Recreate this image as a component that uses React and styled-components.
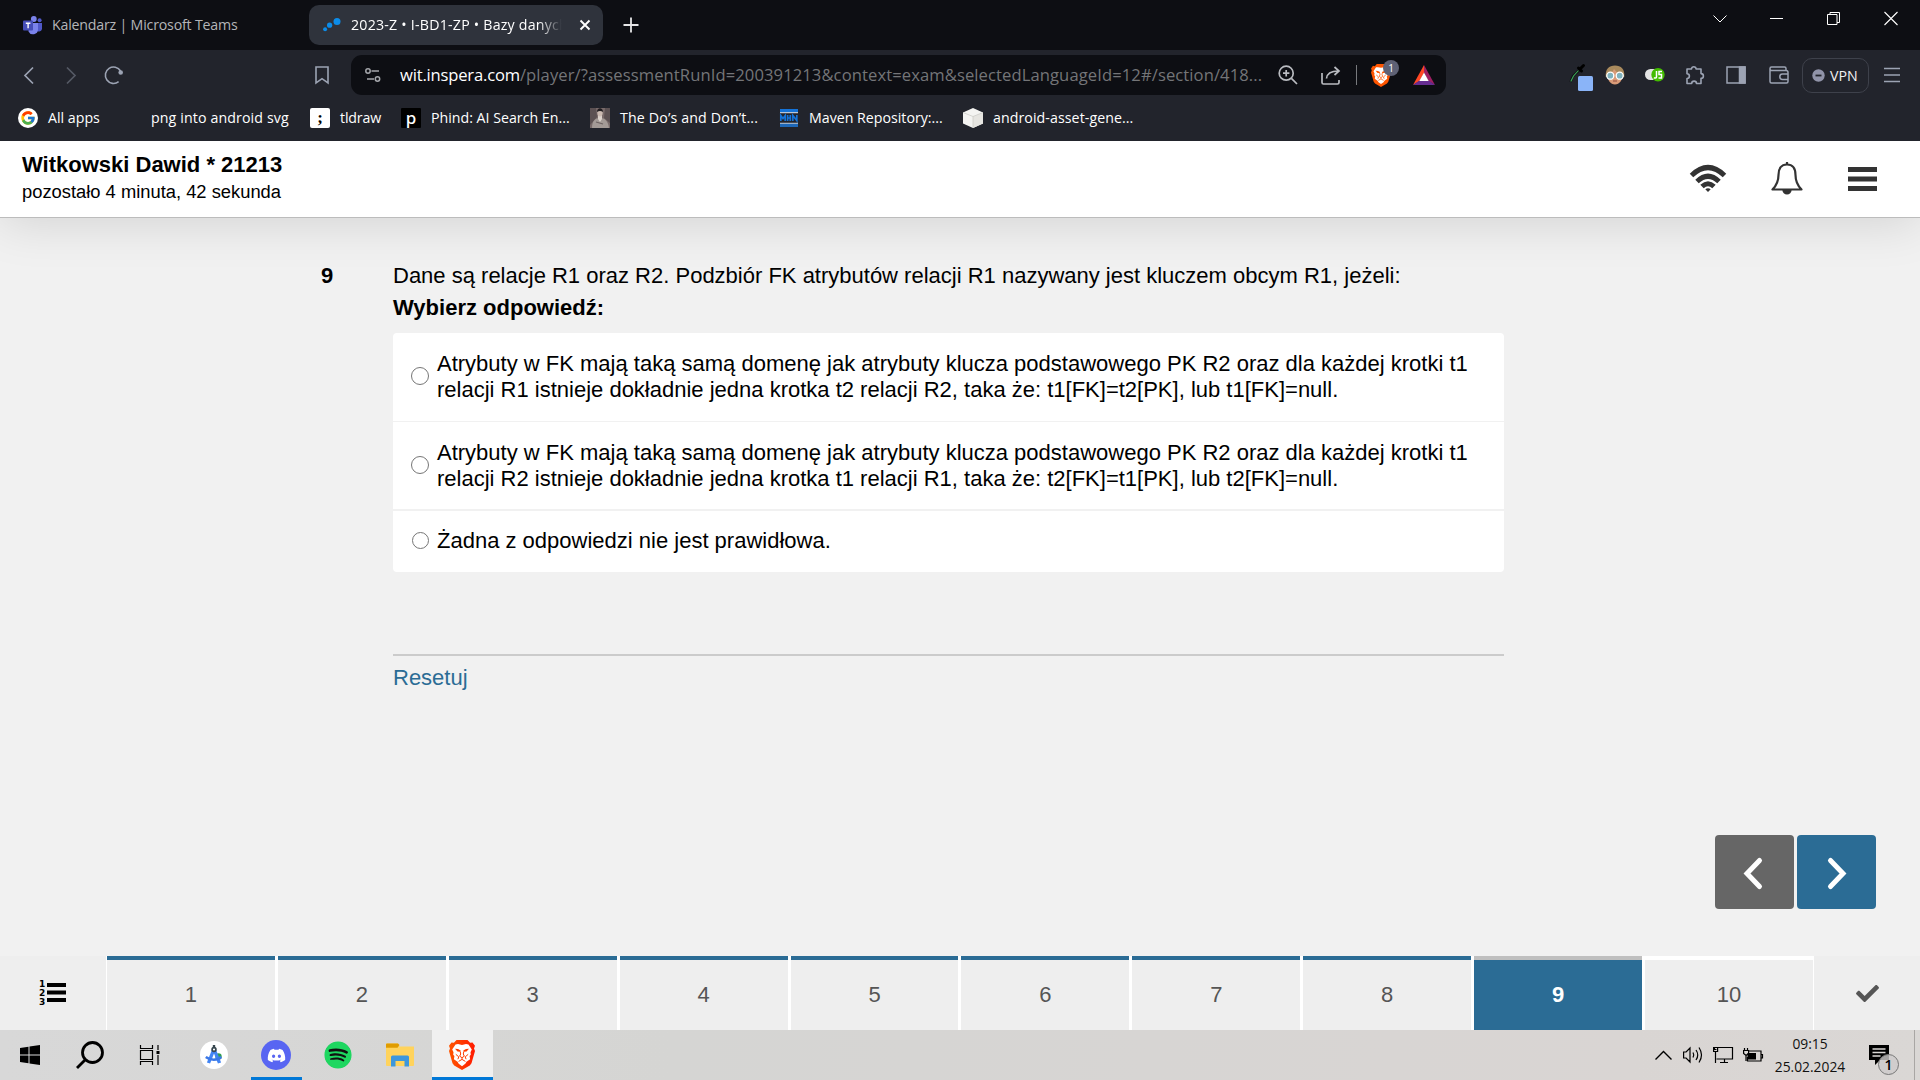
import React from 'react';
import styled, { createGlobalStyle, css } from 'styled-components';
import { FcGoogle } from 'react-icons/fc';
import { FaDiscord, FaSpotify, FaCheck } from 'react-icons/fa';

const GlobalStyle = createGlobalStyle`
  * { box-sizing: border-box; }
  body { margin: 0; overflow: hidden; background: #f1f1f1; }
  svg { display: block; flex: none; overflow: visible; }
`;

const UI_FONT = `'Open Sans', 'Noto Sans', sans-serif`;
const PAGE_FONT = `'Liberation Sans', Arial, sans-serif`;

const Screen = styled.div`
  width: 1920px;
  height: 1080px;
  display: grid;
  grid-template-rows: 50px 91px 77px 738px 74px 50px;
  font-family: ${PAGE_FONT};
`;

/* ---------- browser tab strip ---------- */
const TabStrip = styled.div`
  display: flex;
  align-items: center;
  background: #0d0e13;
  font-family: ${UI_FONT};
  font-size: 14.2px;
`;
const Tab = styled.div`
  display: flex;
  align-items: center;
  height: 40px;
  width: ${(p) => p.$width}px;
  padding-left: ${(p) => p.$pad}px;
  gap: ${(p) => p.$gap}px;
  border-radius: 10px;
  letter-spacing: ${(p) => (p.$active ? '0.22px' : '-0.2px')};
  color: ${(p) => (p.$active ? '#fff' : '#b4b5b8')};
  background: ${(p) => (p.$active ? '#2f333c' : 'transparent')};
  white-space: nowrap;
`;
const TabTitle = styled.span`
  width: ${(p) => p.$width}px;
  padding-bottom: 2px;
  overflow: hidden;
  ${(p) => p.$fade && css`mask-image: linear-gradient(90deg, #000 88%, transparent 99%);`}
`;
const NewTab = styled.div`margin-left: 20px;`;
const WindowControls = styled.div`
  margin-left: auto;
  align-self: flex-start;
  display: flex;
  align-items: center;
  gap: 43px;
  padding: 12px 22px 0 0;
`;

/* ---------- toolbar ---------- */
const Toolbar = styled.div`
  position: relative;
  z-index: 1;
  background: #22242c;
  font-family: ${UI_FONT};
`;
const ToolRow = styled.div`
  display: flex;
  align-items: center;
  height: 50px;
  padding-right: 18px;
`;
const Slot = styled.div`
  display: flex;
  align-items: center;
  justify-content: center;
  flex: none;
  position: relative;
  width: ${(p) => p.$w || 20}px;
  height: 24px;
  margin-left: ${(p) => p.$ml || 0}px;
`;
const AddressBar = styled.div`
  display: flex;
  align-items: center;
  width: 1095px;
  height: 40px;
  margin-left: 22px;
  border-radius: 11px;
  background: #0d0e13;
`;
const Url = styled.div`
  margin-left: 19px;
  width: 868px;
  font-size: 16.6px;
  line-height: 24px;
  white-space: nowrap;
  color: #747578;
`;
const Host = styled.span`
  color: #fff;
  letter-spacing: -0.19px;
`;
const Path = styled.span`letter-spacing: 0.09px;`;
const Divider = styled.div`
  width: 1px;
  height: 20px;
  margin-left: 15px;
  background: #77797d;
`;
const ShieldBadge = styled.span`
  position: absolute;
  left: 12px;
  top: -3px;
  width: 16px;
  height: 16px;
  border-radius: 8px;
  background: #5e6175;
  color: #fff;
  font-size: 10px;
  line-height: 16px;
  text-align: center;
`;
const VpnButton = styled.div`
  display: flex;
  align-items: center;
  gap: 5px;
  width: 67px;
  height: 35px;
  margin-left: 13px;
  padding-left: 9px;
  border: 1px solid #3e414b;
  border-radius: 10px;
  color: #f0f0f2;
  font-size: 14.2px;
`;
const Bookmarks = styled.div`
  display: flex;
  align-items: center;
  height: 36px;
  padding-left: 18px;
  font-size: 14.2px;
  color: #fff;
`;
const Bookmark = styled.div`
  display: flex;
  align-items: center;
  gap: ${(p) => p.$gap || 10}px;
  width: ${(p) => p.$w}px;
  letter-spacing: ${(p) => p.$ls || 0}px;
  white-space: nowrap;
`;
const BookmarkName = styled.span`padding-bottom: 2px;`;
const Favicon = styled.div`
  display: flex;
  align-items: center;
  justify-content: center;
  flex: none;
  width: 20px;
  height: 20px;
  border-radius: ${(p) => p.$radius || 0}px;
  background: ${(p) => p.$bg || 'transparent'};
  color: ${(p) => p.$color || '#fff'};
  font: ${(p) => p.$font || 'inherit'};
`;

/* ---------- exam header ---------- */
const ExamHeader = styled.header`
  display: flex;
  justify-content: space-between;
  padding: 10px 43px 0 22px;
  background: #fff;
  border-bottom: 1px solid #bcbcbc;
  box-shadow: 0 4px 50px rgba(0, 0, 0, 0.13);
  color: #000;
  line-height: 27px;
`;
const Candidate = styled.div`font-size: 22px; font-weight: 700;`;
const TimeLeft = styled.div`font-size: 18.35px;`;
const HeaderIcons = styled.div`
  display: flex;
  align-items: center;
  height: 55px;
`;
const HeaderIcon = styled.div`margin-left: ${(p) => p.$ml || 0}px;`;

/* ---------- question ---------- */
const Main = styled.main`
  display: flex;
  flex-direction: column;
  justify-content: space-between;
  padding: 42px 44px 47px 321px;
  font-size: 22px;
  color: #000;
`;
const Question = styled.section`
  display: grid;
  grid-template-columns: 72px 1111px;
  line-height: 32px;
`;
const Bold = styled.div`font-weight: 700;`;
const Answers = styled.div`
  margin-top: 9px;
  border-radius: 4px;
  overflow: hidden;
`;
const Answer = styled.label`
  display: flex;
  align-items: center;
  gap: 8px;
  height: ${(p) => p.$h}px;
  padding: 0 30px 0 18px;
  border-bottom: ${(p) => p.$line || 0}px solid #f1f1f1;
  background: #fff;
  line-height: ${(p) => p.$lead || 26}px;
`;
const Radio = styled.span`
  flex: none;
  width: ${(p) => (p.$small ? 17 : 18)}px;
  height: ${(p) => (p.$small ? 17 : 18)}px;
  margin: ${(p) => (p.$small ? '0 0.5px 2px 0.5px' : '0 0 2px')};
  border: 1.4px solid #767676;
  border-radius: 50%;
`;
const AnswerText = styled.span`padding: ${(p) => p.$down || 0}px 0 ${(p) => p.$up || 0}px;`;
const Footer = styled.div`
  margin-top: 82px;
  padding-top: 6px;
  border-top: 2px solid #cbcbcb;
  color: #2b6c95;
`;
const Pager = styled.div`
  display: flex;
  justify-content: flex-end;
  gap: 3px;
`;
const PagerButton = styled.div`
  display: flex;
  align-items: center;
  justify-content: center;
  width: 79px;
  height: 74px;
  padding: 2px ${(p) => (p.$primary ? 0 : 3)}px 0 0;
  border-radius: 4px;
  background: ${(p) => (p.$primary ? '#2b6c95' : '#666')};
`;

/* ---------- question navigation ---------- */
const QuestionNav = styled.nav`
  display: grid;
  grid-template-columns: 106px 1706px 106px;
  gap: 1px;
  background: #fff;
`;
const NavEnd = styled.div`
  display: flex;
  align-items: center;
  justify-content: center;
  background: #eee;
`;
const NavTabs = styled.div`
  display: grid;
  grid-template-columns: repeat(10, 1fr);
  gap: 3px;
`;
const NavTab = styled.div`
  display: flex;
  align-items: center;
  justify-content: center;
  border-top: 4px solid ${(p) => p.$edge};
  background: ${(p) => (p.$current ? '#2b6c95' : '#eee')};
  color: ${(p) => (p.$current ? '#fff' : '#555')};
  font-size: 22px;
  font-weight: ${(p) => (p.$current ? 700 : 400)};
  padding-bottom: 1px;
`;
const NumberedList = styled.div`
  display: flex;
  align-items: center;
  gap: 2px;
  padding-right: 1px;
`;
const Digits = styled.div`
  width: 6px;
  font: 700 9px/9px 'DejaVu Sans', sans-serif;
  color: #000;
`;

/* ---------- taskbar ---------- */
const Taskbar = styled.footer`
  display: flex;
  background: linear-gradient(90deg, #d8d8d8, #d5d5d3 35%, #d9d5d3 85%, #dad7d5);
  font-family: ${UI_FONT};
`;
const TaskItem = styled.div`
  display: flex;
  align-items: center;
  justify-content: center;
  width: ${(p) => p.$w}px;
  margin-left: ${(p) => p.$ml || 0}px;
  padding: 3px ${(p) => (p.$open ? 1 : 0)}px 0 0;
  border-bottom: 3px solid ${(p) => (p.$open ? '#0078d7' : 'transparent')};
  background: ${(p) => (p.$focus ? '#f0f0f0' : 'transparent')};
  background-clip: padding-box;
`;
const Disc = styled.div`
  display: flex;
  align-items: center;
  justify-content: center;
  flex: none;
  width: ${(p) => p.$size}px;
  height: ${(p) => p.$size}px;
  border-radius: 50%;
  background: ${(p) => p.$bg};
`;
const Tray = styled.div`
  display: flex;
  align-items: center;
  margin-left: auto;
`;
const Clock = styled.div`
  width: 84px;
  margin-left: 5px;
  font-size: 13.8px;
  line-height: 23px;
  text-align: center;
  color: #111;
`;
const Notice = styled.div`
  position: relative;
  width: 32px;
  height: 30px;
  margin-left: 17px;
  padding-top: 5px;
`;
const NoticeCount = styled.span`
  position: absolute;
  left: 9px;
  top: 14px;
  width: 21px;
  height: 21px;
  border: 1px solid #777;
  border-radius: 50%;
  background: rgba(205, 203, 202, 0.8);
  font-size: 14px;
  font-weight: 600;
  line-height: 19px;
  text-align: center;
  color: #000;
`;
const ShowDesktop = styled.div`
  width: 6px;
  height: 50px;
  margin-left: 13px;
  border-left: 1px solid #a9a6a4;
`;

const Stroke = ({ w, h, c = '#9ca3b3', sw = 1.6, children, ...rest }) => (
  <svg width={w} height={h} viewBox={`0 0 ${w} ${h}`} fill="none" stroke={c} strokeWidth={sw} {...rest}>
    {children}
  </svg>
);

const TeamsIcon = () => (
  <svg width="20" height="19" viewBox="0 0 20 19">
    <circle cx="10.8" cy="3" r="2.9" fill="#7b83eb" />
    <circle cx="16.6" cy="4.2" r="2" fill="#5059c9" />
    <path d="M13 7h6v6a3.3 3.3 0 0 1-6 1z" fill="#5059c9" />
    <path d="M6 7h9v6.5a5 5 0 0 1-9.5 2z" fill="#7b83eb" />
    <rect x="0" y="4.5" width="10" height="10" rx="1" fill="#464eb8" />
    <path d="M2.8 7.3h4.6M5.1 7.3v5" stroke="#fff" strokeWidth="1.4" />
  </svg>
);
const InsperaIcon = () => (
  <svg width="18" height="14" viewBox="0 0 18 14" fill="#0c8ce9">
    <circle cx="2.1" cy="11.2" r="2" />
    <circle cx="6.6" cy="7.2" r="2.6" />
    <circle cx="14" cy="3.6" r="3.5" />
  </svg>
);
const MavenIcon = () => (
  <svg width="18" height="18" viewBox="0 0 18 18">
    <rect width="18" height="3.200" fill="#1573d8" />
    <rect y="3.200" width="18" height="1" fill="#dfe9f5" />
    <path d="M.8 12V6.5l2.200 3 2.200-3V12M7.600 6v6M10.300 6v6M7.600 9h2.700M12.800 12V6.5l4 5V6" fill="none" stroke="#1573d8" strokeWidth="1.700" />
    <rect y="13.8" width="18" height="1" fill="#dfe9f5" />
    <rect y="14.800" width="18" height="3.200" fill="#1e68b8" />
  </svg>
);
const PhotoIcon = () => (
  <svg width="20" height="20" viewBox="0 0 20 20">
    <rect width="20" height="20" fill="#786a6a" />
    <path d="M0 0h6l1 9-7 8zM20 0h-5l-1 10 6 5z" fill="#5c5153" />
    <path d="M2 20c0-7 3-10 8-10s8 3 9 10z" fill="#a39a96" />
    <path d="M8 7h4v4l-2 3-2-3z" fill="#dcd2cc" />
    <ellipse cx="10" cy="4.8" rx="2.7" ry="3.6" fill="#cbbab2" />
    <path d="M7 4c0-5 6-5 6 0-2-1.500-4-1.500-6 0z" fill="#211d20" />
    <path d="M6 14l7 2" stroke="#6c6261" strokeWidth="1.200" />
  </svg>
);
const BoxIcon = () => (
  <svg width="20" height="20" viewBox="0 0 20 20">
    <path d="M10 0l10 4.500v11L10 20 0 15.500v-11z" fill="#f4f4f2" />
    <path d="M10 8.500l10-4V15.500L10 20z" fill="#e6e5e1" />
    <path d="M0 4.500l10 4 10-4M10 8.500V20" fill="none" stroke="#c9c8c4" strokeWidth=".7" />
  </svg>
);
const BatIcon = () => (
  <svg width="22" height="20" viewBox="0 0 22 20">
    <path d="M11 0L0 20l6.500-4L11 8z" fill="#ff4724" />
    <path d="M11 0l11 20-6.500-4L11 8z" fill="#9e1f63" />
    <path d="M0 20l6-4.200h10L22 20z" fill="#662d91" />
    <path d="M11 7.500l-4.700 8.500h9.400z" fill="#fff" />
  </svg>
);
const BraveLion = ({ w, h, flat }) => {
  const ink = flat ? '#ff5500' : '#ff3c00';
  return (
    <svg width={w} height={h} viewBox="0 0 26 30">
      <defs>
        <linearGradient id="braveFill" x1="0" x2="1">
          <stop offset="0" stopColor="#ff5500" />
          <stop offset="1" stopColor="#ff1a00" />
        </linearGradient>
      </defs>
      <path d="M7.500 0h11l2.600 2.800 2.400-.4 2.500 3.400-1 2.600 1 2.600-3.500 12.200-1.700 2.300L13 30l-7.800-4.500-1.700-2.300L0 11l1-2.600L0 5.800l2.500-3.400 2.400.4z" fill={flat ? ink : 'url(#braveFill)'} />
      <path d="M6.500 4.400l2.500-.3 4 .9 4-.9 2.500.3 3.300 5.200-1.300 2.600.3 2.600-1.200 1.200.5 3.200-3.600 2.600-1.200 2L13 26.200l-3.300-2.400-1.200-2-3.600-2.600.5-3.200-1.200-1.200.3-2.600-1.300-2.600z" fill="#fff" />
      <path d="M6 8.800l3 .2 2.700 1.400-.4 1.400-2.800-.2zM20 8.800l-3 .2-2.700 1.400.4 1.400 2.800-.2z" fill={ink} />
      <path d="M11.200 11.500l.5 2.500-1 2.200L13 17.700l2.300-1.500-1-2.200.5-2.500M6.800 14.300l3 2.600-.9 2.300M19.200 14.300l-3 2.600.9 2.300M9.600 21.400l3.400-2 3.400 2M13 17.700v1.700" fill="none" stroke={ink} strokeWidth="1" />
    </svg>
  );
};
const DropperIcon = () => (
  <svg width="24" height="28" viewBox="0 0 24 28">
    <path d="M11 8.500L4 15l-2.500 6" stroke="#101216" strokeWidth="2.400" fill="none" />
    <path d="M9.500 9.500L4.500 15 1.800 20.500" stroke="#3fae5a" strokeWidth="1.100" fill="none" />
    <path d="M9.500 7l3 3M11 8l3.500-3.500" stroke="#000" strokeWidth="3" strokeLinecap="round" />
    <rect x="9" y="15" width="15" height="15" rx="1.500" fill="#8ab4f8" />
  </svg>
);
const FaceIcon = () => (
  <svg width="20" height="20" viewBox="0 0 20 20">
    <path d="M.800 12C0 4 4 .500 10 .500S20 4 19.200 12z" fill="#a98a5d" />
    <path d="M2.500 10C6 9 8 6 9 4c2 3 5 5 8.500 6 0 5-3 9.500-7.500 9.500S2.500 15 2.500 10z" fill="#d99b78" />
    <circle cx="5.300" cy="10.700" r="3.500" fill="#7fb1bd" stroke="#fff" strokeWidth="1.300" />
    <circle cx="14.700" cy="10.700" r="3.500" fill="#7fb1bd" stroke="#fff" strokeWidth="1.300" />
    <path d="M8 16h4" stroke="#9c5a48" strokeWidth="1.200" />
  </svg>
);
const JsIcon = () => (
  <svg width="20" height="14" viewBox="0 0 20 14">
    <rect x="0" y="1" width="16" height="11" rx="5.500" fill="#e4e4e4" />
    <circle cx="13" cy="6.700" r="6.700" fill="#43bd00" />
    <path d="M11.500 3v6c0 1.300-1.800 1.300-2.600.6M17 3.500h-3v3h2.500V10h-3" fill="none" stroke="#fff" strokeWidth="1.500" />
  </svg>
);
const StudioIcon = () => (
  <Disc $size={28} $bg="#fff">
    <svg width="18" height="22" viewBox="0 0 18 22">
      <circle cx="13.500" cy="12.500" r="3.200" fill="#2f9e4f" />
      <path d="M9 5L3.500 19M9 5l5.500 14" stroke="#4285f4" strokeWidth="3.400" />
      <path d="M.8 13c4.500 3.600 11.500 3.600 15.500 0" stroke="#3b78e7" strokeWidth="2.400" fill="none" />
      <circle cx="9" cy="5.500" r="1.900" fill="#fff" stroke="#37474f" strokeWidth="1.700" />
      <path d="M9 1v3" stroke="#37474f" strokeWidth="2.400" />
    </svg>
  </Disc>
);
const FolderIcon = () => (
  <svg width="28" height="24" viewBox="0 0 28 24">
    <path d="M0 1.500Q0 .500 1 .500h11l1.500 3H28V22q0 1-1 1H1q-1 0-1-1z" fill="#ffd35c" />
    <path d="M0 1.500Q0 .500 1 .500h11l1.500 1.500-2 2.700H0z" fill="#e09c00" />
    <path d="M5 23.500V14q0-1.500 1.500-1.500h15Q23 12.500 23 14v9.500h-4.500v-5.500h-9v5.500z" fill="#3d97dc" />
  </svg>
);

export default function App() {
  return (
    <>
      <GlobalStyle />
      <Screen>
        <TabStrip>
          <Tab $width={309} $pad={23} $gap={9}>
            <TeamsIcon />
            <TabTitle $width={200}>Kalendarz | Microsoft Teams</TabTitle>
          </Tab>
          <Tab $active $width={294} $pad={14} $gap={10}>
            <InsperaIcon />
            <TabTitle $fade $width={213}>2023-Z • I-BD1-ZP • Bazy danych</TabTitle>
            <Stroke w={10} h={10} c="#fff" sw={1.9}>
              <path d="M6.500.5l9 9M15.500.5l-9 9" />
            </Stroke>
          </Tab>
          <NewTab>
            <Stroke w={16} h={16} c="#e6e6e8" sw={1.8}><path d="M8 .5v15M.5 8h15" /></Stroke>
          </NewTab>
          <WindowControls>
            <Stroke w={14} h={8} c="#fff" sw={1}><path d="M.5.5L7 7 13.500.5" /></Stroke>
            <Stroke w={14} h={13} c="#fff" sw={1}><path d="M0 6.500h13" /></Stroke>
            <Stroke w={14} h={13} c="#fff" sw={1}><path d="M.5 2.500h9.500v10H.5zM3 2.500V.5h9.500v10h-2.500" /></Stroke>
            <Stroke w={14} h={13} c="#fff" sw={1.100}><path d="M.5 0l13 13M13.500 0l-13 13" /></Stroke>
          </WindowControls>
        </TabStrip>

        <Toolbar>
          <ToolRow>
            <Slot $w={10} $ml={24}><Stroke w={10} h={17} sw={1.700}><path d="M9 .5l-8 8 8 8" /></Stroke></Slot>
            <Slot $w={10} $ml={32}><Stroke w={10} h={17} c="#555a65" sw={1.700}><path d="M1 .5l8 8-8 8" /></Stroke></Slot>
            <Slot $ml={28}>
              <Stroke w={20} h={20}>
                <path d="M14.600 16.700A8.200 8.200 0 1 1 16.600 6" />
                <circle cx="16.700" cy="7.500" r="2.300" fill="#9ca3b3" stroke="none" />
              </Stroke>
            </Slot>
            <Slot $w={14} $ml={191}><Stroke w={14} h={18}><path d="M1 1h12v16l-6-4.300L1 17z" /></Stroke></Slot>
            <AddressBar>
              <Slot $w={16} $ml={14}>
                <Stroke w={16} h={14} c="#a5a7ac" sw={1.500}>
                  <circle cx="3" cy="3" r="2.200" /><path d="M6.500 3H14M2 11h7" /><circle cx="12.500" cy="11" r="2.200" />
                </Stroke>
              </Slot>
              <Url><Host>wit.inspera.com</Host><Path>/player/?assessmentRunId=200391213&amp;context=exam&amp;selectedLanguageId=12#/section/418...</Path></Url>
              <Slot $ml={10}>
                <Stroke w={20} h={20} c="#b9bbc0" sw={1.700}>
                  <circle cx="8.200" cy="8.200" r="7" /><path d="M13.400 13.400l5.600 5.600M5 8.200h6.400M8.200 5v6.400" />
                </Stroke>
              </Slot>
              <Slot $w={20} $ml={23}>
                <Stroke w={20} h={19} c="#b9bbc0" sw={1.700}>
                  <path d="M1 7v9.500Q1 18 2.500 18h14q1.500 0 1.500-1.500V14M5.500 12.500C6 7 10 5 17.500 5M13.500 1l4.500 4-4.500 4" />
                </Stroke>
              </Slot>
              <Divider />
              <Slot $ml={14}>
                <BraveLion w={20} h={23} flat />
                <ShieldBadge>1</ShieldBadge>
              </Slot>
              <Slot $w={22} $ml={22}><BatIcon /></Slot>
            </AddressBar>
            <Slot $w={24} $ml={123}><DropperIcon /></Slot>
            <Slot $ml={12}><FaceIcon /></Slot>
            <Slot $ml={20}><JsIcon /></Slot>
            <Slot $ml={20}>
              <Stroke w={20} h={20} strokeLinejoin="round">
                <path d="M2 4h4.500a2.300 2.300 0 1 1 4.600 0H16v4.600a2.400 2.400 0 1 1 0 4.800V18.500h-4.500a2.300 2.300 0 0 0-4.800 0H2v-5a2.300 2.300 0 0 0 0-4.800z" />
              </Stroke>
            </Slot>
            <Slot $ml={21}>
              <Stroke w={20} h={18} sw={1.500}><rect x="1" y="1" width="18" height="16" /><path d="M13.500 1H19v16h-5.500z" fill="#9ca3b3" /></Stroke>
            </Slot>
            <Slot $ml={23}>
              <Stroke w={20} h={18} sw={1.500}>
                <path d="M17 4.500V2.500Q17 1 15.500 1h-13Q1 1 1 2.500v13Q1 17 2.500 17h15q1.500 0 1.500-1.500v-9Q19 4.500 17 4.500H2.500Q1 4.500 1 3M19 8h-5.500a2.700 2.700 0 0 0 0 5.400H19" />
              </Stroke>
            </Slot>
            <VpnButton>
              <Stroke w={13} h={13} c="#22242c" sw={1.800}>
                <circle cx="6.500" cy="6.500" r="6.200" fill="#9194a9" stroke="none" /><path d="M3.500 6.500h6" />
              </Stroke>
              VPN
            </VpnButton>
            <Slot $w={16} $ml={15}><Stroke w={16} h={16} sw={1.500}><path d="M0 1.500h16M0 8h16M0 14.500h16" /></Stroke></Slot>
          </ToolRow>
          <Bookmarks>
            <Bookmark $w={133}>
              <Favicon $bg="#fff" $radius={10}><FcGoogle size={16} /></Favicon>
              <BookmarkName>All apps</BookmarkName>
            </Bookmark>
            <Bookmark $w={159} $ls={0.12}><BookmarkName>png into android svg</BookmarkName></Bookmark>
            <Bookmark $w={91} $ls={-0.15}>
              <Favicon $bg="#fff" $color="#000" $radius={2} $font="700 17px 'Liberation Serif', serif">;</Favicon>
              <BookmarkName>tldraw</BookmarkName>
            </Bookmark>
            <Bookmark $w={189}>
              <Favicon $bg="#000" $radius={1} $font="500 17px/16px 'Noto Sans', sans-serif">p</Favicon>
              <BookmarkName>Phind: AI Search En...</BookmarkName>
            </Bookmark>
            <Bookmark $w={190} $ls={0.15}><PhotoIcon /><BookmarkName>The Do’s and Don’t...</BookmarkName></Bookmark>
            <Bookmark $w={183} $gap={11}><MavenIcon /><BookmarkName>Maven Repository:...</BookmarkName></Bookmark>
            <Bookmark $w={180} $ls={0.07}><BoxIcon /><BookmarkName>android-asset-gene...</BookmarkName></Bookmark>
          </Bookmarks>
        </Toolbar>

        <ExamHeader>
          <div>
            <Candidate>Witkowski Dawid * 21213</Candidate>
            <TimeLeft>pozostało 4 minuta, 42 sekunda</TimeLeft>
          </div>
          <HeaderIcons>
            <HeaderIcon>
              <Stroke w={36} h={27} c="#333" sw={5}>
                <path d="M1.500 10.500Q18-5.500 34.500 10.500" />
                <path d="M7 16.500q11-10.500 22 0" />
                <path d="M12 21.500q6-5.500 12 0" />
                <path d="M15.300 24.300q2.700-2 5.400 0L18 27z" fill="#333" stroke="none" />
              </Stroke>
            </HeaderIcon>
            <HeaderIcon $ml={45}>
              <Stroke w={32} h={33} c="#333" sw={2.200}>
                <path d="M16 2.500c-6 0-8.500 4.500-8.500 10.500 0 7-2.500 11-6 14.500h29c-3.500-3.500-6-7.500-6-14.500C24.500 7 22 2.500 16 2.500z" strokeLinejoin="round" />
                <path d="M16 0v3" />
                <path d="M12.500 28a3.500 3.500 0 0 0 7 0z" fill="#333" />
              </Stroke>
            </HeaderIcon>
            <HeaderIcon $ml={45}>
              <Stroke w={29} h={24} c="#333" sw={5}><path d="M0 2.500h29M0 12h29M0 21.500h29" /></Stroke>
            </HeaderIcon>
          </HeaderIcons>
        </ExamHeader>

        <Main>
          <Question>
            <Bold>9</Bold>
            <div>
              <div>Dane są relacje R1 oraz R2. Podzbiór FK atrybutów relacji R1 nazywany jest kluczem obcym R1, jeżeli:</div>
              <Bold>Wybierz odpowiedź:</Bold>
              <Answers>
                <Answer $h={89} $line={1} $lead={26.4}>
                  <Radio />
                  <AnswerText>Atrybuty w FK mają taką samą domenę jak atrybuty klucza podstawowego PK R2 oraz dla każdej krotki t1<br />relacji R1 istnieje dokładnie jedna krotka t2 relacji R2, taka że: t1[FK]=t2[PK], lub t1[FK]=null.</AnswerText>
                </Answer>
                <Answer $h={89} $line={2}>
                  <Radio />
                  <AnswerText $down={1}>Atrybuty w FK mają taką samą domenę jak atrybuty klucza podstawowego PK R2 oraz dla każdej krotki t1<br />relacji R2 istnieje dokładnie jedna krotka t1 relacji R1, taka że: t2[FK]=t1[PK], lub t2[FK]=null.</AnswerText>
                </Answer>
                <Answer $h={61} $lead={26.4}>
                  <Radio $small />
                  <AnswerText $up={1}>Żadna z odpowiedzi nie jest prawidłowa.</AnswerText>
                </Answer>
              </Answers>
              <Footer>Resetuj</Footer>
            </div>
          </Question>
          <Pager>
            <PagerButton>
              <Stroke w={18} h={31} c="#fff" sw={5} strokeLinecap="round"><path d="M15.500 2.500L3 15.500l12.500 13" /></Stroke>
            </PagerButton>
            <PagerButton $primary>
              <Stroke w={18} h={31} c="#fff" sw={5} strokeLinecap="round"><path d="M2.500 2.500L15 15.500l-12.500 13" /></Stroke>
            </PagerButton>
          </Pager>
        </Main>

        <QuestionNav>
          <NavEnd>
            <NumberedList>
              <Digits>1<br />2<br />3</Digits>
              <Stroke w={19} h={20} c="#000" sw={3.800}><path d="M0 2h19M0 9.500h19M0 17h19" /></Stroke>
            </NumberedList>
          </NavEnd>
          <NavTabs>
            {[1, 2, 3, 4, 5, 6, 7, 8, 9, 10].map((n) => (
              <NavTab key={n} $current={n === 9} $edge={n < 9 ? '#2b6c95' : n === 9 ? '#bfbfbf' : '#fff'}>{n}</NavTab>
            ))}
          </NavTabs>
          <NavEnd><FaCheck size={23} color="#555" /></NavEnd>
        </QuestionNav>

        <Taskbar>
          <TaskItem $w={20} $ml={20}>
            <svg width="20" height="20" viewBox="0 0 20 20"><path d="M0 3l8.500-1.200V9.500H0zM9.500 1.600L20 0v9.500H9.500zM0 10.500h8.500v7.800L0 17zM9.500 10.500H20V20L9.500 18.500z" /></svg>
          </TaskItem>
          <TaskItem $w={28} $ml={36}>
            <Stroke w={28} h={28} c="#000" sw={2.800}><circle cx="16.500" cy="11.500" r="10" /><path d="M9.500 18.500L1 27" /></Stroke>
          </TaskItem>
          <TaskItem $w={20} $ml={36}>
            <Stroke w={20} h={20} c="#000" sw={1.200}>
              <path d="M.5 0v3.500h12V0M.5 5.500h12v9H.5zM.5 20v-3.500h12V20M18 0v5M18 10v10" />
              <rect x="16.500" y="6" width="3" height="3" fill="#000" stroke="none" />
            </Stroke>
          </TaskItem>
          <TaskItem $w={28} $ml={40}><StudioIcon /></TaskItem>
          <TaskItem $w={51} $ml={23} $open>
            <Disc $size={30} $bg="#5865f2"><FaDiscord size={19} color="#fff" /></Disc>
          </TaskItem>
          <TaskItem $w={28} $ml={22}>
            <Disc $size={26} $bg="#111"><FaSpotify size={28} color="#1ed760" /></Disc>
          </TaskItem>
          <TaskItem $w={28} $ml={34}><FolderIcon /></TaskItem>
          <TaskItem $w={61} $ml={18} $open $focus><BraveLion w={26} h={30} /></TaskItem>
          <Tray>
            <Stroke w={17} h={9} c="#000" sw={1.400}><path d="M.5 8.500l8-8 8 8" /></Stroke>
            <Slot $ml={11} $w={20}>
              <Stroke w={20} h={18} c="#000" sw={1.200}>
                <path d="M.6 6h2.500L7 2v14l-3.900-4H.6zM10 6.500q1.500 2.500 0 5M13 4q3.500 5 0 10M16 1.500q5 7.500 0 15" />
              </Stroke>
            </Slot>
            <Slot $ml={10} $w={20}>
              <Stroke w={20} h={18} c="#000" sw={1.200}>
                <path d="M5 1.500h14.500v11.500H3.500M11.500 13v3.500M7 16.500h8M2.500 5.500V17M.6 1.500h4v4h-4zM1.500 1.500v2h2" />
              </Stroke>
            </Slot>
            <Slot $ml={10} $w={20}>
              <Stroke w={20} h={15} c="#000" sw={1.200}>
                <path d="M6 3h12v10H4.500V9M18.500 6.500h1V10h-1M1.500 0v2M4.500 0v2M.6 2.500h5v3l-2.500 2-2.500-2zM3 7.500V13" />
                <rect x="4.500" y="5" width="8.500" height="6.500" fill="#000" stroke="none" />
              </Stroke>
            </Slot>
            <Clock>09:15<br />25.02.2024</Clock>
            <Notice>
              <svg width="20" height="20" viewBox="0 0 20 20">
                <path d="M0 0h20v15h-9l-5 5v-5H0z" />
                <path d="M3.500 4h13M3.500 7.500h13M3.500 11h8" stroke="#dad7d5" strokeWidth="1.300" />
              </svg>
              <NoticeCount>1</NoticeCount>
            </Notice>
            <ShowDesktop />
          </Tray>
        </Taskbar>
      </Screen>
    </>
  );
}
